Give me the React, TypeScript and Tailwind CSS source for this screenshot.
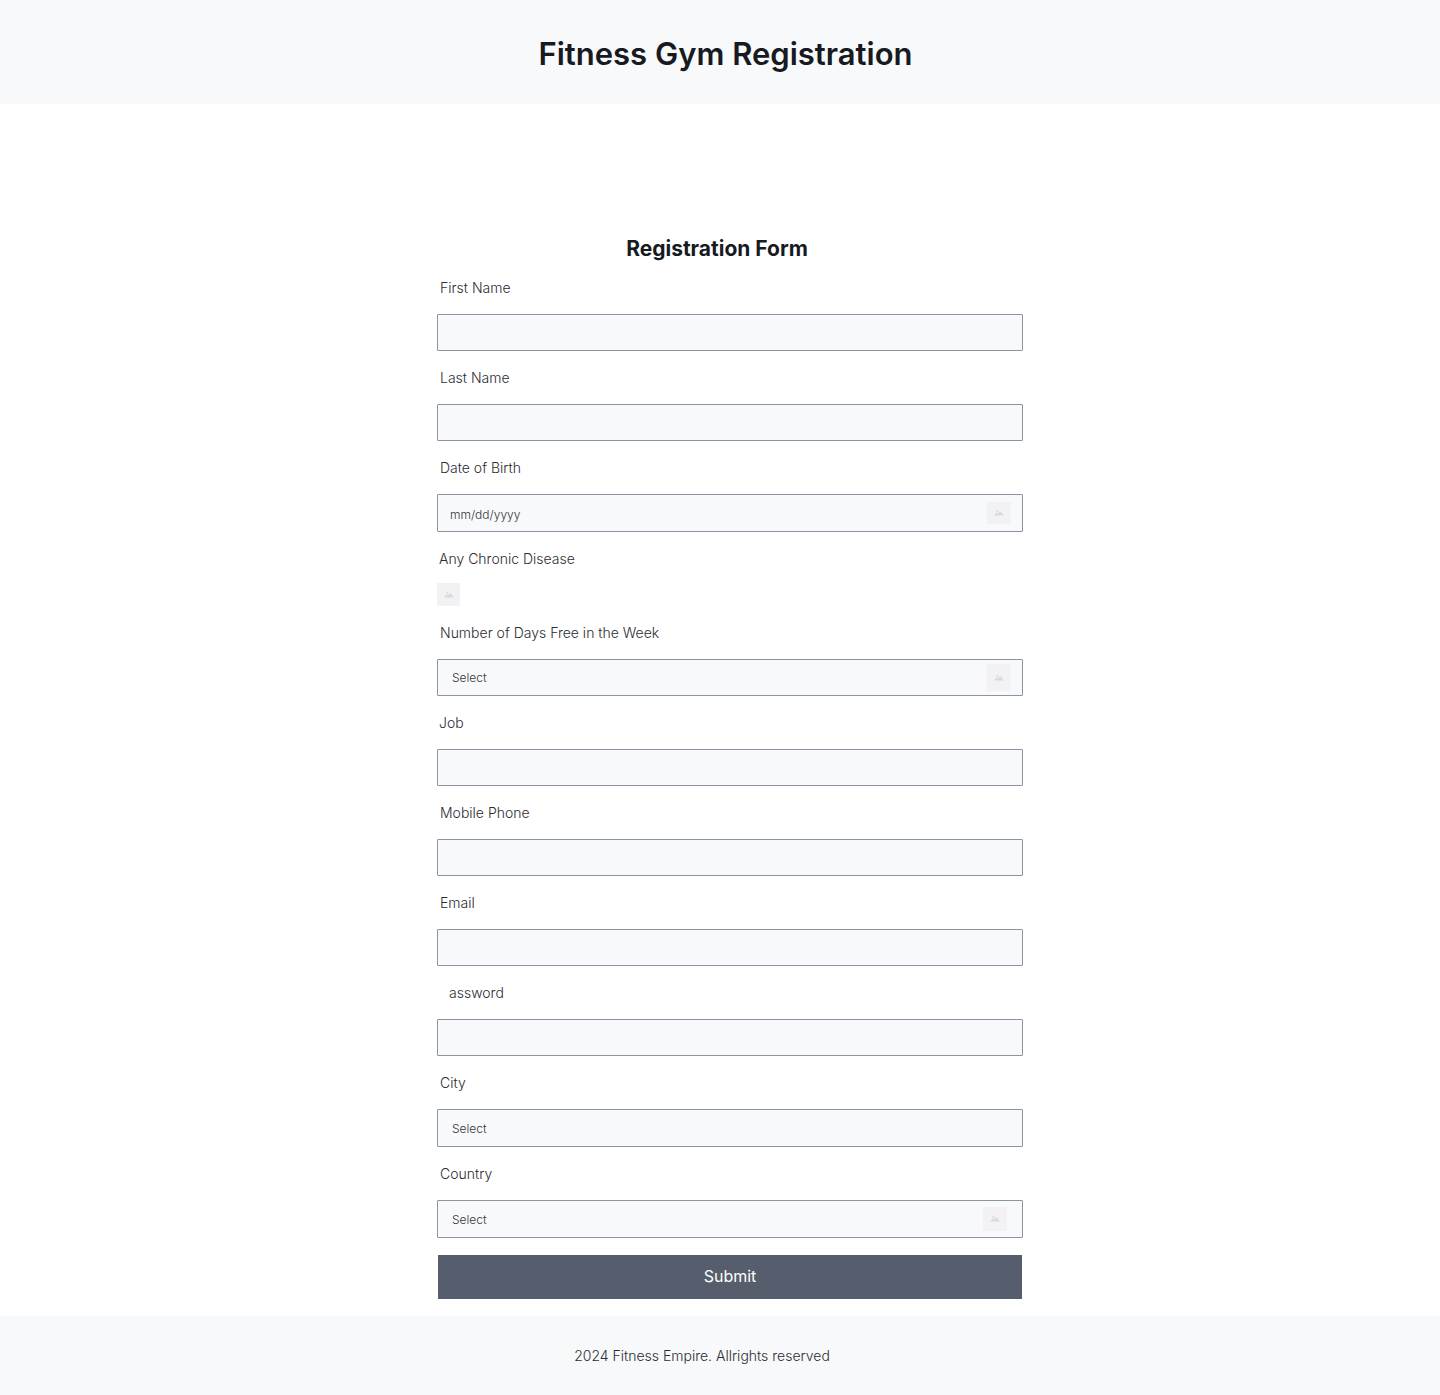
import { useId, type ReactNode } from "react";

const control =
  "block w-full appearance-none rounded-[1px] border border-[#8d93a1] bg-[#f8f9fb] text-xs font-light text-[#323539] placeholder:text-[#323539] placeholder:opacity-100";

function Mountain({ className }: { className: string }) {
  return (
    <span
      aria-hidden="true"
      className={`pointer-events-none flex items-center justify-center bg-[#f2f2f4] ${className}`}
    >
      <svg viewBox="0 0 10 6" className="h-[6px] w-[10px]" fill="#d9dadd">
        <path d="M0 5.6 2.2 2.8Q2.7 2.4 3.2 2.8L4 3.5 5.6 1.4Q6.1 0.9 6.7 1.4L10 5.6Z" />
        <circle cx="3.3" cy="1.1" r="1" />
      </svg>
    </span>
  );
}

type FieldProps = {
  label: string;
  labelClass?: string;
  gapClass?: string;
  children: (id: string) => ReactNode;
};

function Field({ label, labelClass = "pl-[3px]", gapClass = "gap-4", children }: FieldProps) {
  const id = useId();
  return (
    <div className={`flex flex-col ${gapClass}`}>
      <label htmlFor={id} className={`text-sm font-light text-[#2b2d32] ${labelClass}`}>
        {label}
      </label>
      <div className="relative">{children(id)}</div>
    </div>
  );
}

function TextField({ label, type = "text", labelClass }: { label: string; type?: string; labelClass?: string }) {
  return (
    <Field label={label} labelClass={labelClass}>
      {(id) => <input id={id} type={type} className={`${control} h-[37px] px-3`} />}
    </Field>
  );
}

function SelectField({
  label,
  options,
  sizeClass = "h-[38px] pt-[2px]",
  icon,
}: {
  label: string;
  options: string[];
  sizeClass?: string;
  icon?: ReactNode;
}) {
  return (
    <Field label={label}>
      {(id) => (
        <>
          <select id={id} defaultValue="" className={`${control} ${sizeClass} px-[14px]`}>
            <option value="">Select</option>
            {options.map((o) => (
              <option key={o}>{o}</option>
            ))}
          </select>
          {icon}
        </>
      )}
    </Field>
  );
}

export default function App() {
  return (
    <div className="bg-white font-['Inter',sans-serif]">
      <header className="bg-[#f8f9fb] pt-[30px] pb-[26px] pl-[11px] text-center">
        <h1 className="text-[31px] leading-[48px] font-semibold text-[#171a1f]">Fitness Gym Registration</h1>
      </header>

      <main className="flex justify-center pt-[129px] pb-[17px] pl-5">
        <form className="flex w-full max-w-[586px] flex-col gap-[17px]" onSubmit={(e) => e.preventDefault()}>
          <h2 className="pt-1 pr-[26px] text-center text-[21px] leading-6 font-bold text-[#171a1f]">
            Registration Form
          </h2>
          <TextField label="First Name" />
          <TextField label="Last Name" />
          <Field label="Date of Birth">
            {(id) => (
              <>
                <input id={id} type="text" placeholder="mm/dd/yyyy" className={`${control} h-[38px] px-3 pt-[3px]`} />
                <Mountain className="absolute top-2 right-3 h-[22px] w-6" />
              </>
            )}
          </Field>
          <Field label="Any Chronic Disease" labelClass="pl-[2px]" gapClass="gap-[14px]">
            {(id) => (
              <>
                <input id={id} type="checkbox" className="block size-[23px] appearance-none bg-[#f2f2f4]" />
                <Mountain className="absolute top-0 left-0 size-[23px]" />
              </>
            )}
          </Field>
          <SelectField
            label="Number of Days Free in the Week"
            options={["1", "2", "3", "4", "5", "6", "7"]}
            sizeClass="h-[37px]"
            icon={<Mountain className="absolute top-[5px] right-3 h-[27px] w-6" />}
          />
          <TextField label="Job" labelClass="pl-[2px]" />
          <TextField label="Mobile Phone" type="tel" />
          <TextField label="Email" type="email" />
          <TextField label="assword" type="password" labelClass="pl-3" />
          <SelectField label="City" options={[]} />
          <SelectField
            label="Country"
            options={[]}
            icon={<Mountain className="absolute top-[7px] right-4 size-6" />}
          />
          <button type="submit" className="mx-px h-11 bg-[#565d6d] pb-[2px] text-base text-white">
            Submit
          </button>
        </form>
      </main>

      <footer className="bg-[#f8f9fb] pt-[30px] pr-9 pb-[29px] text-center text-sm font-light text-[#2b2d32]">
        2024 Fitness Empire. Allrights reserved
      </footer>
    </div>
  );
}
